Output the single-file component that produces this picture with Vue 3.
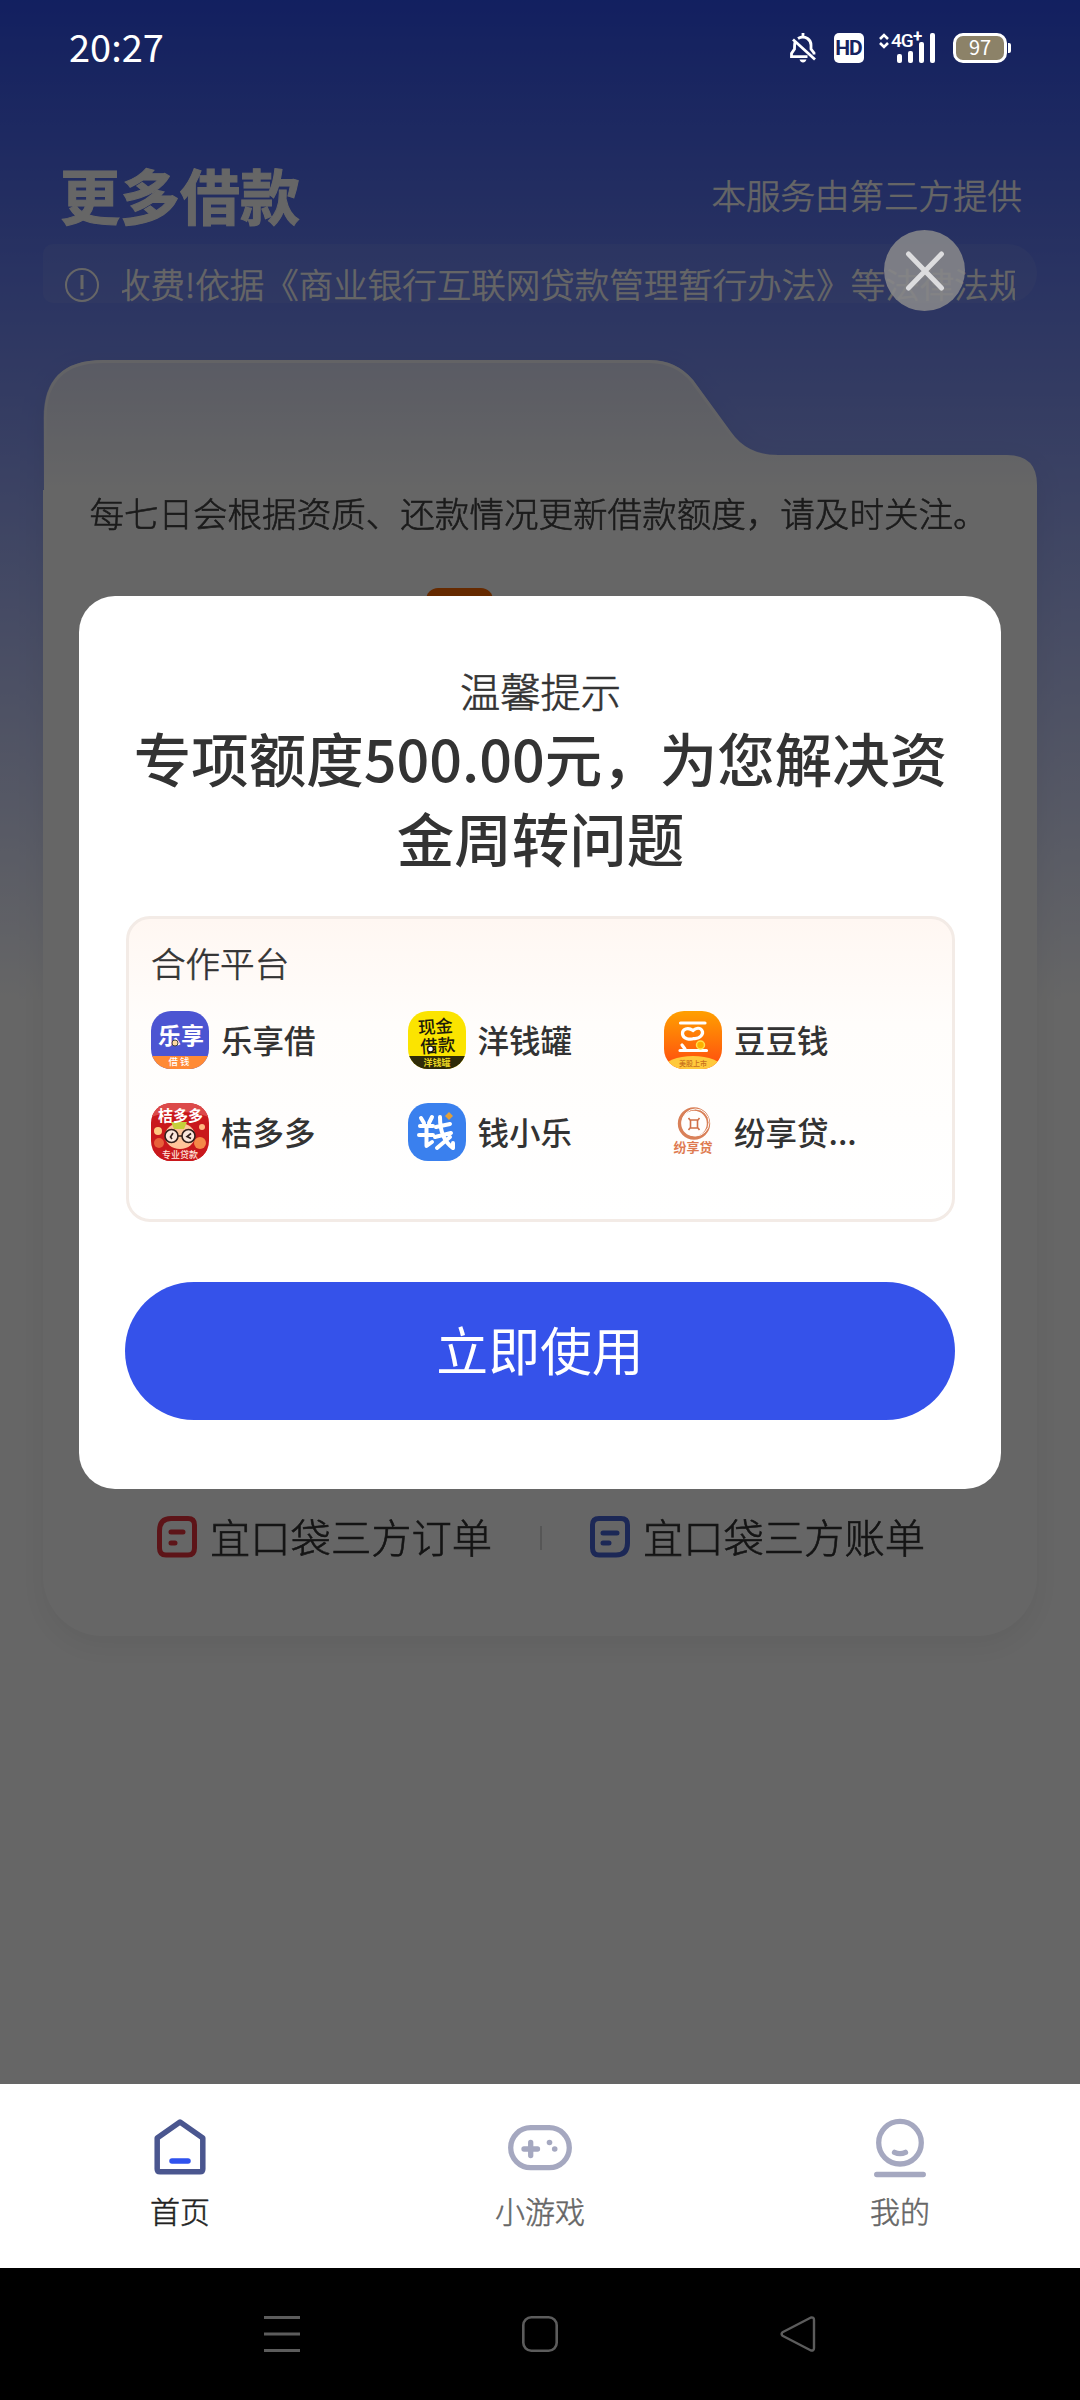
<script setup>
const signal = [9, 12, 21, 30]
const partners = [
  { id: 'lexiang', name: '乐享借' },
  { id: 'yangqian', name: '洋钱罐' },
  { id: 'doudou', name: '豆豆钱' },
  { id: 'jieduo', name: '桔多多' },
  { id: 'xiaole', name: '钱小乐' },
  { id: 'fenxiang', name: '纷享贷...' },
]
</script>

<template>
  <div class="phone">
    <div class="page">
      <header class="head">
        <h1>更多借款</h1>
        <span>本服务由第三方提供</span>
      </header>
      <div class="notice">
        <svg width="36" height="36" viewBox="0 0 36 36" fill="none" stroke="#fff" stroke-width="2">
          <circle cx="18" cy="18" r="16" />
          <path d="M18 8v14M18 25.5v3" stroke-width="3" />
        </svg>
        <div class="marquee"><span>收费!依据《商业银行互联网贷款管理暂行办法》等法律法规</span></div>
      </div>
      <section class="card">
        <svg class="tab-shape" width="994" height="130" viewBox="0 0 994 130">
          <defs>
            <linearGradient id="tabfill" x1="0" y1="0" x2="0" y2="1">
              <stop offset="0" stop-color="#e0e3f9" />
              <stop offset="1" stop-color="#fff" />
            </linearGradient>
            <linearGradient id="tabedge" x1="0" y1="0" x2="0" y2="1">
              <stop offset="0" stop-color="#fff" stop-opacity=".75" />
              <stop offset="1" stop-color="#fff" stop-opacity="0" />
            </linearGradient>
          </defs>
          <path d="M1 130V58Q1 0 60 0H607Q633 0 650 20L688 72Q704 95 734 95H964Q994 95 994 125V130Z" fill="url(#tabfill)" />
          <path d="M2 130V58Q2 1.5 60 1.5H607Q633 2 649 21L687 73Q703 96 734 96" fill="none" stroke="url(#tabedge)" stroke-width="3" />
        </svg>
        <div class="card-body">
          <p>每七日会根据资质、还款情况更新借款额度，请及时关注。</p>
          <i class="tag"></i>
          <div class="links">
            <div class="link">
              <svg width="42" height="44" viewBox="0 0 42 44" fill="none" stroke="#e8343c" stroke-width="5" stroke-linecap="round">
                <path d="M15 3.500H32Q38.500 3.500 38.500 10V33Q38.500 40 32 40H10Q3.500 40 3.500 33V16Q3.500 3.500 15 3.500Z" />
                <path d="M15 17H27M15 28H19" />
              </svg>
              <span>宜口袋三方订单</span>
            </div>
            <i class="sep"></i>
            <div class="link">
              <svg width="42" height="44" viewBox="0 0 42 44" fill="none" stroke="#4864d8" stroke-width="5" stroke-linecap="round">
                <path d="M10 3.500H32Q38.500 3.500 38.500 10V28Q38.500 40 27 40H10Q3.500 40 3.500 33V10Q3.500 3.500 10 3.500Z" />
                <path d="M14 18H28M14 28H20" />
              </svg>
              <span>宜口袋三方账单</span>
            </div>
          </div>
        </div>
      </section>
    </div>

    <div class="mask"></div>

    <div class="status">
      <span class="clock">20:27</span>
      <div class="status-icons">
        <svg width="26" height="30" viewBox="0 0 26 30" fill="none" stroke="#fff" stroke-width="2.800">
          <path d="M13 0V4M8 5.500Q13 2.500 17.500 5.500Q21 8 21 12V16L24 20V21.500M5 9.500Q4.500 11 4.500 16L1.500 20.500V23.600H17.500M3 6.500L25 26.500" />
          <path d="M9.500 26.500H16.500Q15.500 29.500 13 29.500Q10.500 29.500 9.500 26.500Z" fill="#fff" stroke="none" />
        </svg>
        <span class="hd">HD</span>
        <div class="net">
          <svg width="10" height="16" viewBox="0 0 10 16" fill="none" stroke="#fff" stroke-width="2.600"><path d="M1 6L5 2L9 6M1 10L5 14L9 10" /></svg>
          <span class="g4">4G</span><span class="plus">+</span>
          <i v-for="(h, n) in signal" :key="n" class="bar" :style="{ height: h + 'px', left: 18 + n * 11 + 'px' }"></i>
        </div>
        <div class="battery"><span>97</span></div>
      </div>
    </div>

    <button class="close">
      <svg width="42" height="42" viewBox="0 0 42 42" stroke="#dcdcde" stroke-width="5" stroke-linecap="round"><path d="M4.500 4L37.500 38M37.500 4L4.500 38" /></svg>
    </button>

    <div class="modal">
      <div class="hint">温馨提示</div>
      <h2>专项额度500.00元，为您解决资金周转问题</h2>
      <div class="partners">
        <div class="ptitle">合作平台</div>
        <div class="grid">
          <div v-for="p in partners" :key="p.id" class="partner">
            <svg class="logo" width="58" height="58" viewBox="0 0 58 58">
              <defs>
                <clipPath id="round"><rect width="58" height="58" rx="20" /></clipPath>
                <linearGradient id="orange" x1="0" y1="0" x2="0" y2="1"><stop offset="0" stop-color="#ffa000" /><stop offset="1" stop-color="#ff4a10" /></linearGradient>
              </defs>
              <g v-if="p.id === 'lexiang'" clip-path="url(#round)">
                <rect width="58" height="58" fill="#4c55d2" />
                <path d="M0 45H58V58H0Z" fill="#ff8a35" />
                <text x="30" y="33" font-size="23" font-weight="700" fill="#fff" text-anchor="middle">乐享</text>
                <circle cx="24" cy="32" r="3" fill="#ffd9a0" stroke="#444" stroke-width="1" />
                <text x="29" y="54" font-size="9.500" letter-spacing="2" fill="#fff" text-anchor="middle">借钱</text>
              </g>
              <g v-else-if="p.id === 'yangqian'" clip-path="url(#round)">
                <rect width="58" height="58" fill="#fbe400" />
                <path d="M0 45H58V58H0Z" fill="#2f2b08" />
                <g transform="rotate(-4 29 24)" fill="#1d1b08" font-size="17.500" font-weight="500" text-anchor="middle">
                  <text x="28" y="22">现金</text><text x="29" y="41">借款</text>
                </g>
                <circle cx="22.500" cy="38" r="3" fill="#fff" stroke="#1d1b08" stroke-width="1.500" />
                <text x="29" y="54.500" font-size="9" font-weight="700" fill="#e8d520" text-anchor="middle">洋钱罐</text>
              </g>
              <g v-else-if="p.id === 'doudou'" clip-path="url(#round)">
                <rect width="58" height="58" fill="url(#orange)" />
                <ellipse cx="29" cy="57" rx="29" ry="12" fill="#ffc93c" />
                <g fill="none" stroke="#fff" stroke-width="3.200" stroke-linecap="round">
                  <path d="M16.500 12H41M16 39.500H42.500M18 34L21 38" />
                  <path d="M29 19.500C24 16 18 18 18.500 23C19 28 26 29 30 27.500C36 28 40 23 38 19.500C36 16 32 17 29 19.500Z" />
                </g>
                <circle cx="36.500" cy="34" r="4" fill="#ffb000" stroke="#ffe14a" stroke-width="1.500" />
                <text x="29" y="54.500" font-size="7" fill="#c8701c" text-anchor="middle">美股上市</text>
              </g>
              <g v-else-if="p.id === 'jieduo'" clip-path="url(#round)">
                <rect width="58" height="58" fill="#c9181c" />
                <path d="M0 0H58V14Q29 4 0 14Z" fill="#dc4a4a" />
                <circle cx="7" cy="28" r="4" fill="#ffc880" /><circle cx="51" cy="24" r="3" fill="#ffb880" />
                <circle cx="8" cy="40" r="5" fill="#e8603a" /><circle cx="49" cy="40" r="6" fill="#f58a48" />
                <ellipse cx="29" cy="33" rx="15" ry="13" fill="#ffc49a" />
                <path d="M20 19H36L33 26H23Z" fill="#c5cf3a" />
                <text x="29.500" y="18" font-size="15" font-weight="700" fill="#fff" text-anchor="middle">桔多多</text>
                <g fill="#fbe6dc" stroke="#33201c" stroke-width="1.600"><circle cx="20.500" cy="33" r="6.500" /><circle cx="37.500" cy="33" r="6.500" /><path d="M27 33H31M22 30L19.500 34L21 36M40 30.500L36 33.500L40 35.500" fill="none" /></g>
                <path d="M0 46H58V58H0Z" fill="#c9181c" />
                <text x="29" y="54.500" font-size="9" font-weight="500" fill="#ffe6dc" text-anchor="middle">专业贷款</text>
              </g>
              <g v-else-if="p.id === 'xiaole'" clip-path="url(#round)">
                <rect width="58" height="58" fill="#3a80ee" />
                <g fill="none" stroke="#fff" stroke-width="4" stroke-linecap="round" stroke-linejoin="round">
                  <path d="M13 15L16 20M24 14L21 20M12 23H25M11 32H25M18.500 23V43L24 39" />
                  <path d="M32 14Q32 36 45 45V40M28 24L42 21M27 34L43 30M42 34L29 45" />
                </g>
                <path d="M41 9L45 13L41 17L37 13Z" fill="#e2a03a" />
              </g>
              <g v-else>
                <circle cx="30" cy="20.500" r="14.500" fill="none" stroke="#d98058" stroke-width="3.400" />
                <circle cx="31.500" cy="19.500" r="13.500" fill="none" stroke="#fffdfb" stroke-width="1" />
                <path d="M26 17L24.500 15M34 17L35.500 15M26 25L24.500 27M34 25L35.500 27M26.500 17H33.500V25H26.500Z" fill="none" stroke="#d07048" stroke-width="1.600" />
                <text x="29" y="49" font-size="13" font-weight="700" fill="#de7a50" text-anchor="middle">纷享贷</text>
              </g>
            </svg>
            <span>{{ p.name }}</span>
          </div>
        </div>
      </div>
      <button class="use">立即使用</button>
    </div>

    <nav class="tabs">
      <div class="tab active">
        <svg width="64" height="64" viewBox="0 0 64 64" fill="none" stroke="#4a568f" stroke-width="5.500" stroke-linejoin="round" stroke-linecap="round">
          <path d="M32 8L54.800 24V55Q54.800 57.800 52 57.800H12Q9.200 57.800 9.200 55V24Z" />
          <path d="M24 47H40" stroke="#2f52ee" />
        </svg>
        <span>首页</span>
      </div>
      <div class="tab">
        <svg width="64" height="64" viewBox="0 0 64 64" fill="none" stroke="#a5a8c0" stroke-width="5.300" stroke-linecap="round">
          <rect x="2.700" y="13.700" width="58.600" height="40" rx="20" />
          <path d="M16 35H29.500M22.700 28.500V41.500" />
          <g fill="#a5a8c0" stroke="none"><circle cx="41.500" cy="28.500" r="2.800" /><circle cx="46.700" cy="35" r="2.800" /></g>
        </svg>
        <span>小游戏</span>
      </div>
      <div class="tab">
        <svg width="64" height="64" viewBox="0 0 64 64" fill="none" stroke="#a5a8c0" stroke-width="5.300" stroke-linecap="round">
          <circle cx="32" cy="28.700" r="21.300" />
          <path d="M26.500 38.300Q32 41 37.500 38.300M8.700 60.500H55.300" />
        </svg>
        <span>我的</span>
      </div>
    </nav>
    <div class="sysnav">
      <svg width="36" height="36" viewBox="0 0 36 36" stroke="#5c5c5c" stroke-width="3"><path d="M0 1.500H36M0 18H36M0 34.500H36" /></svg>
      <svg width="36" height="36" viewBox="0 0 36 36" fill="none" stroke="#5c5c5c" stroke-width="2.600"><rect x="1.300" y="1.300" width="33.400" height="33.400" rx="8" /></svg>
      <svg width="36" height="36" viewBox="0 0 36 36" fill="none" stroke="#5c5c5c" stroke-width="2.400" stroke-linejoin="round"><path d="M2.500 16.200L30.500 1.700Q34 .8 34 4V32Q34 35.200 30.500 34.300L2.500 19.800Q.8 18 2.500 16.200Z" /></svg>
    </div>
  </div>
</template>

<style>
body { margin: 0; background: #fff; }
</style>

<style scoped>
.phone {
  position: relative;
  width: 1080px;
  height: 2400px;
  overflow: hidden;
  display: flex;
  flex-direction: column;
  font-family: "Noto Sans CJK SC", sans-serif;
  color: #333;
}
.page {
  height: 2084px;
  box-sizing: border-box;
  padding: 159px 43px 0;
  background: linear-gradient(#2f50f0 0, #fff 1000px);
}
.head { display: flex; justify-content: space-between; align-items: center; height: 70px; padding: 0 15px 0 17px; color: #fff; }
.head h1 { margin: 0; font-size: 60px; font-weight: 700; line-height: 70px; -webkit-text-stroke: 1px #fff; }
.head span { font-size: 34.500px; font-weight: 300; -webkit-text-stroke: .6px; }
.notice {
  margin-top: 15px; height: 59px; border-radius: 10px 30px 30px 10px;
  background: rgba(255, 255, 255, .07);
  display: flex; align-items: flex-start; padding: 23px 22px 0 21px; box-sizing: border-box;
}
.notice svg { flex: none; }
.marquee { margin-left: 22px; height: 50px; margin-top: -9px; flex: 1; overflow: hidden; white-space: nowrap; color: #fff; font-size: 34.500px; font-weight: 300; line-height: 50px; -webkit-text-stroke: .6px; }
.marquee span { margin-left: -6px; }
.card { margin-top: 57px; filter: drop-shadow(0 10px 14px rgba(0, 0, 0, .06)); }
.tab-shape { display: block; }
.card-body { position: relative; height: 1146px; box-sizing: border-box; background: #fff; border-radius: 0 0 60px 60px; display: flex; flex-direction: column; }
.card-body p { margin: -3px 0 0 -3px; text-align: center; font-size: 34.560px; font-weight: 300; line-height: 50px; color: #444; white-space: nowrap; -webkit-text-stroke: .6px; }
.tag { margin: 51px 0 0 383px; width: 67px; height: 40px; border-radius: 12px; background: #ff6a00; }
.links { margin-top: auto; margin-bottom: 69px; display: flex; justify-content: space-between; align-items: center; padding: 0 112px 0 113px; height: 58px; }
.link { display: flex; align-items: center; gap: 12px; font-size: 40.300px; font-weight: 300; color: #333; line-height: 58px; white-space: nowrap; -webkit-text-stroke: .6px; }
.link span { margin-top: -4px; }
.link svg { margin-top: -2px; }
.sep { width: 2px; height: 24px; background: #d8d8d8; }
.mask { position: absolute; inset: 0 0 316px; background: rgba(0, 0, 0, .6); }
.status { position: absolute; inset: 0 0 auto; height: 96px; padding: 0 69px 0 69px; display: flex; justify-content: space-between; align-items: center; color: #fff; }
.clock { margin-top: -5px; font-size: 38px; font-weight: 400; line-height: 56px; }
.status-icons { display: flex; align-items: center; height: 30px; }
.hd { margin-left: 18px; width: 30px; height: 30px; border-radius: 5px; background: #fff; color: #16235f; font: 700 21px/30px Roboto, sans-serif; letter-spacing: -1px; text-indent: -1px; display: flex; justify-content: center; }
.net { position: relative; margin-left: 15px; width: 74px; height: 30px; }
.net svg { position: absolute; left: 0; top: 0; }
.g4 { position: absolute; left: 12px; top: -2px; font: 500 19px/20px Roboto, sans-serif; letter-spacing: -1px; }
.plus { position: absolute; left: 34px; top: -7px; font: 700 17px/20px Roboto, sans-serif; }
.bar { position: absolute; bottom: 0; width: 5px; border-radius: 2px; background: #fff; }
.battery { position: relative; width: 54px; height: 30px; box-sizing: border-box; border: 3px solid #fff; border-radius: 10px; background: #8c8268; display: flex; align-items: center; justify-content: center; font-size: 20px; line-height: 22px; margin-right: 4px; }
.battery span { margin-top: -2px; }
.battery::after { content: ""; position: absolute; right: -7px; top: 7px; width: 3px; height: 10px; border-radius: 0 2px 2px 0; background: #fff; }
.close { position: absolute; left: 884px; top: 230px; width: 81px; height: 81px; border: 0; padding: 0; border-radius: 50%; background: rgba(136, 136, 138, .88); display: flex; align-items: center; justify-content: center; }
.modal { position: absolute; left: 79px; top: 596px; width: 922px; height: 893px; box-sizing: border-box; padding: 65px 46px 0 47px; border-radius: 36px; background: #fff; }
.hint { text-align: center; font-size: 40.300px; font-weight: 300; line-height: 58px; -webkit-text-stroke: .6px; }
h2 { margin: -2px -20px 0; text-align: center; font-size: 57.500px; font-weight: 500; line-height: 80px; padding: 0 20px; }
.partners { margin-top: 39px; height: 306px; box-sizing: border-box; border: 3px solid #f3ebe6; border-radius: 24px; background: linear-gradient(#fff7f2, #fffdfb 35%, #fff); padding: 18px 0 0 22px; }
.ptitle { font-size: 34.560px; font-weight: 300; line-height: 50px; -webkit-text-stroke: .6px; }
.grid { margin-top: 24px; display: grid; grid-template-columns: repeat(3, 256.500px); row-gap: 34px; }
.partner { display: flex; align-items: center; gap: 12px; height: 58px; font-size: 31.500px; font-weight: 500; line-height: 46px; white-space: nowrap; }
.partner span { margin-top: -2px; }
.logo { flex: none; }
.use { display: block; width: 830px; height: 138px; margin: 60px 0 0 -1px; border: 0; border-radius: 69px; background: #3552ea; color: #fff; font: 400 51.840px/1 "Noto Sans CJK SC", sans-serif; padding: 0 0 5px; }
.tabs { height: 184px; background: #fff; display: grid; grid-template-columns: repeat(3, 1fr); }
.tab { display: flex; flex-direction: column; align-items: center; padding-top: 30px; color: #666; font-size: 30px; font-weight: 300; line-height: 44px; -webkit-text-stroke: .5px; }
.tab span { margin-top: 10px; }
.tab.active { color: #222; }
.sysnav { height: 132px; background: #000; display: flex; align-items: center; padding: 0 264px; justify-content: space-between; }
</style>
